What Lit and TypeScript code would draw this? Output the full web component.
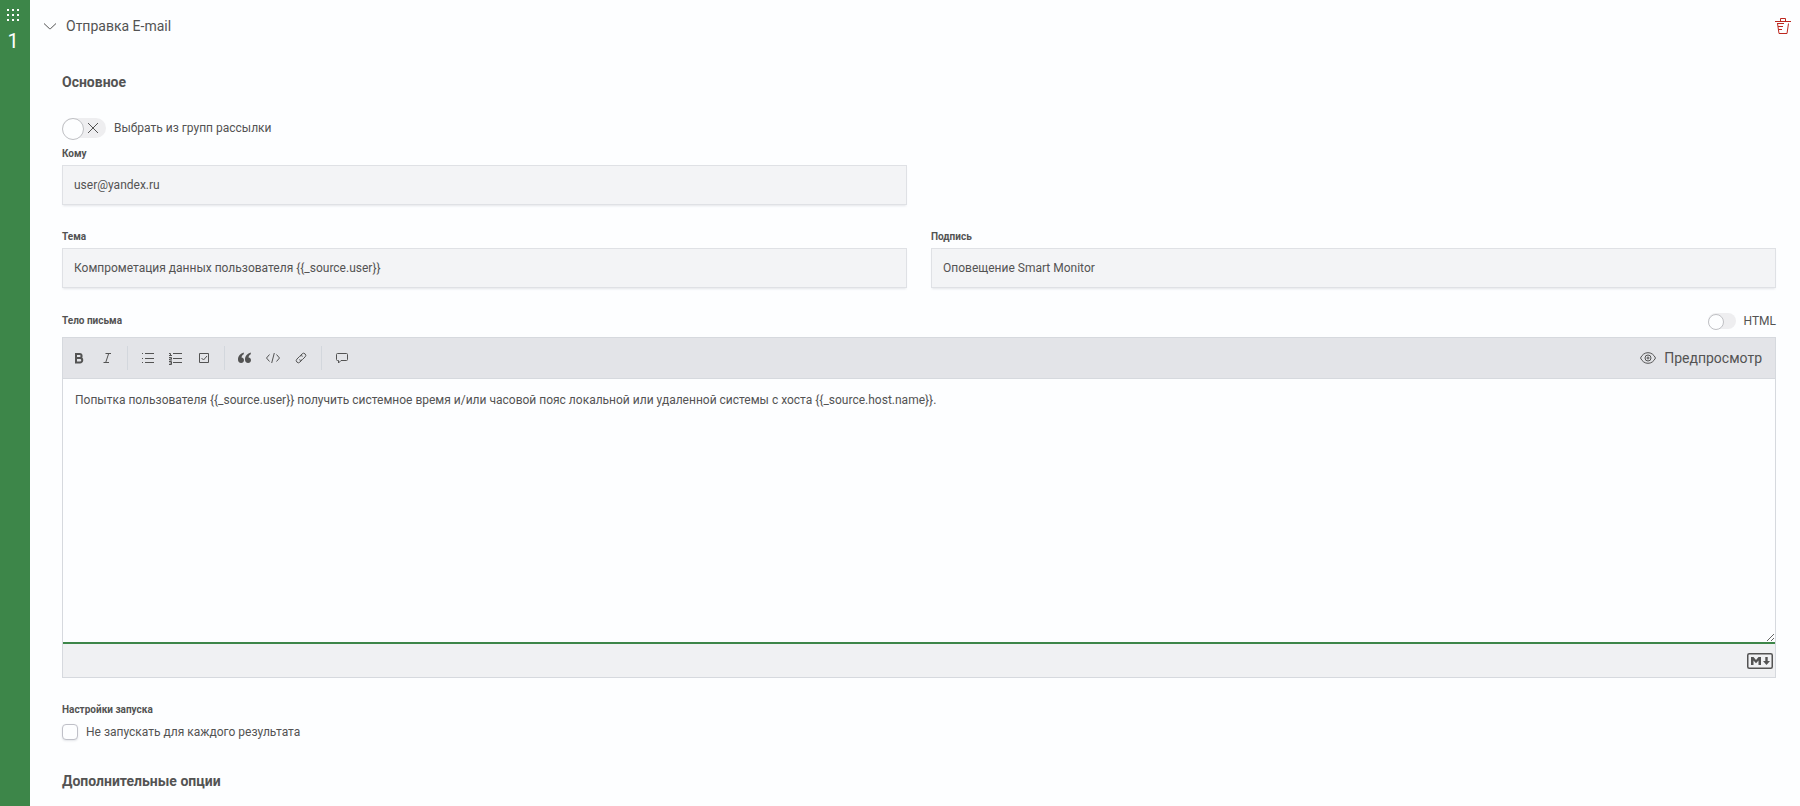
import { LitElement, html, svg, css, TemplateResult, SVGTemplateResult } from "lit";
import { customElement, state } from "lit/decorators.js";

interface Tool {
  label: string;
  icon: SVGTemplateResult;
}

const toolGroups: Tool[][] = [
  [
    {
      label: "Полужирный",
      icon: svg`<path fill="none" stroke="currentColor" stroke-width="2" d="M5 4h3.600a2 2 0 0 1 0 4H5m0 0h4a2.200 2.200 0 0 1 0 4.500H5M5 3v10.500"/>`,
    },
    {
      label: "Курсив",
      icon: svg`<path fill="none" stroke="currentColor" d="M6.500 3.500h5.500M4.500 12.500h5.500M9.700 3.500l-3 9"/>`,
    },
  ],
  [
    {
      label: "Маркированный список",
      icon: svg`<path fill="none" stroke="currentColor" d="M5 3.500h9M5 8.500h9M5 12.500h9M2 3.500h1M2 8.500h1M2 12.500h1"/>`,
    },
    {
      label: "Нумерованный список",
      icon: svg`<path fill="none" stroke="currentColor" d="M5 3.500h9M5 8.500h9M5 12.500h9M1 3.500h1.500v2.500M1 5.500h3M1 7.500h2.500v1.500h-2v1h2.500M1 11.500h2.500v3H1M1.500 13h2"/>`,
    },
    {
      label: "Список задач",
      icon: svg`<path fill="none" stroke="currentColor" d="M3.500 3.500h9v9h-9zM5.500 8l2 2 3.500-4"/>`,
    },
  ],
  [
    {
      label: "Цитата",
      icon: svg`<path fill="currentColor" d="M6.800 2.500C3.500 3.300 1 6 1 9.400c0 2 1.200 3.600 3.100 3.600 1.700 0 2.900-1.100 2.900-2.900 0-1.500-1-2.600-2.500-2.700.2-1.300 1-2.400 2.300-3.100zM13.800 2.500c-3.300.8-5.800 3.500-5.800 6.900 0 2 1.200 3.600 3.100 3.600 1.700 0 2.900-1.100 2.900-2.900 0-1.500-1-2.600-2.500-2.700.2-1.300 1-2.400 2.300-3.100z"/>`,
    },
    {
      label: "Код",
      icon: svg`<path fill="none" stroke="currentColor" d="M4.500 4.500L1.500 8l3 3.500M11.500 4.500l3 3.500-3 3.500M9.300 3l-2.600 10"/>`,
    },
    {
      label: "Ссылка",
      icon: svg`<path fill="none" stroke="currentColor" d="M7.200 5.800l1.900-1.900a2.100 2.100 0 0 1 3 3L9.300 9.700a2.100 2.100 0 0 1-3 0M8.800 10.200l-1.900 1.900a2.100 2.100 0 0 1-3-3l2.800-2.800a2.100 2.100 0 0 1 3 0"/>`,
    },
  ],
  [
    {
      label: "Комментарий",
      icon: svg`<path fill="none" stroke="currentColor" d="M3.500 3.500h9a1 1 0 0 1 1 1v5a1 1 0 0 1-1 1H7l-2.500 2.500v-2.500h-1a1 1 0 0 1-1-1v-5a1 1 0 0 1 1-1z"/>`,
    },
  ],
];

@customElement("app-root")
export class AppRoot extends LitElement {
  static styles = css`
    :host {
      display: flex;
      min-height: 100vh;
      background: #fdfeff;
      color: #535353;
      font-family: Roboto, "Noto Sans", sans-serif;
      font-size: 12px;
      line-height: 20px;
    }
    * {
      box-sizing: border-box;
    }
    svg {
      display: block;
      flex: none;
    }
    button {
      display: inline-flex;
      align-items: center;
      justify-content: center;
      padding: 0;
      border: 0;
      background: none;
      color: inherit;
      font: inherit;
      cursor: pointer;
    }
    .rail {
      display: flex;
      flex: none;
      flex-direction: column;
      gap: 6px;
      width: 30px;
      padding: 7px 5px;
      background: #3d8649;
      color: #fff;
    }
    .step {
      width: 16px;
      font-size: 20px;
      line-height: 24px;
      text-align: center;
    }
    .content {
      flex: 1;
      min-width: 0;
    }
    .head {
      display: flex;
      align-items: center;
      justify-content: space-between;
      height: 52px;
      padding: 0 9px 0 12px;
    }
    .toggle {
      gap: 8px;
      font-size: 14px;
    }
    .remove {
      color: #bd271e;
    }
    .form {
      padding: 18px 24px 12px 32px;
    }
    .title {
      margin: 0;
      font-size: 14px;
      line-height: 24px;
      font-weight: 700;
    }
    .group {
      display: flex;
      align-items: center;
      gap: 8px;
      width: max-content;
      margin-top: 24px;
    }
    .switch {
      display: grid;
      align-items: center;
    }
    .switch > * {
      grid-area: 1 / 1;
    }
    .cross {
      justify-self: end;
      margin-right: 5px;
      pointer-events: none;
    }
    .track {
      display: flex;
      width: 44px;
      height: 20px;
      margin: 0;
      border-radius: 10px;
      background: #eeeef0;
      appearance: none;
      cursor: pointer;
    }
    .track::before {
      content: "";
      width: 20px;
      height: 20px;
      border: 1px solid #bfc0c4;
      border-radius: 50%;
      background: #fdfeff;
    }
    .track:checked {
      justify-content: flex-end;
      background: #3d8649;
    }
    .track.small {
      width: 28px;
      height: 16px;
    }
    .track.small::before {
      width: 14px;
      height: 14px;
      margin: 1px 0;
    }
    .row {
      display: grid;
      grid-template-columns: 1fr 1fr;
      gap: 24px;
    }
    .row + .row {
      margin-top: 24px;
    }
    .group + .row {
      margin-top: 8px;
    }
    .field {
      display: flex;
      flex-direction: column;
      gap: 3px;
    }
    .label {
      font-size: 10px;
      line-height: 16px;
      font-weight: 700;
    }
    .input {
      width: 100%;
      height: 40px;
      padding: 0 11px;
      border: 1px solid #dfe1e5;
      border-radius: 0;
      outline: 0;
      background: #f3f4f6;
      box-shadow: 0 2px 2px -1px rgba(80, 90, 110, 0.15);
      color: inherit;
      font: inherit;
    }
    .bodyhead {
      display: flex;
      align-items: center;
      justify-content: space-between;
      margin: 23px 0 6px;
    }
    .html {
      display: flex;
      align-items: center;
      gap: 8px;
    }
    .editor {
      border: 1px solid #d6d9de;
    }
    .bar {
      display: flex;
      align-items: center;
      justify-content: space-between;
      height: 41px;
      padding: 0 13px 0 4px;
      border-bottom: 1px solid #d6d9de;
      background: #e3e4e8;
    }
    .tools,
    .set {
      display: flex;
      align-items: center;
    }
    .set {
      gap: 4px;
    }
    .set + .set {
      margin-left: 8px;
      padding-left: 8px;
      border-left: 1px solid #d3d7dd;
    }
    .tool {
      width: 24px;
      height: 24px;
    }
    .preview {
      gap: 8px;
      font-size: 14px;
    }
    .text {
      display: block;
      width: 100%;
      height: 265px;
      padding: 11px 12px;
      border: 0;
      border-bottom: 2px solid #3d8649;
      outline: 0;
      background: #fdfeff;
      color: inherit;
      font: inherit;
      resize: vertical;
    }
    .foot {
      display: flex;
      align-items: center;
      justify-content: flex-end;
      height: 33px;
      padding: 0 2px;
      background: #f0f1f3;
    }
    .launch {
      margin: 24px 0 0;
      padding: 0;
      border: 0;
    }
    .legend {
      padding: 0;
    }
    .check {
      display: flex;
      align-items: center;
      gap: 8px;
      width: max-content;
      padding-top: 4px;
    }
    .box {
      width: 16px;
      height: 16px;
      margin: 0;
      border: 1px solid #bfc0c8;
      border-radius: 4px;
      background: #fdfeff;
      box-shadow: 0 1px 2px rgba(80, 90, 110, 0.15);
      appearance: none;
    }
    .box:checked {
      background: #3d8649;
    }
    .launch + .title {
      margin-top: 27px;
    }
  `;

  @state() private open = true;

  private icon(content: SVGTemplateResult): TemplateResult {
    return html`<svg width="16" height="16" viewBox="0 0 16 16" aria-hidden="true">${content}</svg>`;
  }

  private field(id: string, label: string, value: string): TemplateResult {
    return html`<div class="field">
      <label class="label" for=${id}>${label}</label>
      <input class="input" id=${id} type="text" .value=${value} />
    </div>`;
  }

  private form(): TemplateResult {
    return html`<div class="form">
      <h2 class="title">Основное</h2>
      <label class="group">
        <span class="switch">
          <input class="track" type="checkbox" role="switch" />
          <svg class="cross" width="16" height="16" viewBox="0 0 16 16" aria-hidden="true">
            <path fill="none" stroke="currentColor" d="M3 3l10 10M13 3L3 13" />
          </svg>
        </span>
        Выбрать из групп рассылки
      </label>
      <div class="row">${this.field("to", "Кому", "user@yandex.ru")}</div>
      <div class="row">
        ${this.field("subject", "Тема", "Компрометация данных пользователя {{_source.user}}")}
        ${this.field("signature", "Подпись", "Оповещение Smart Monitor")}
      </div>
      <div class="bodyhead">
        <label class="label" for="body">Тело письма</label>
        <label class="html"><input class="track small" type="checkbox" role="switch" />HTML</label>
      </div>
      <div class="editor">
        <div class="bar">
          <div class="tools">
            ${toolGroups.map(
              (group) => html`<div class="set">
                ${group.map(
                  (tool) => html`<button class="tool" type="button" aria-label=${tool.label}>
                    ${this.icon(tool.icon)}
                  </button>`
                )}
              </div>`
            )}
          </div>
          <button class="preview" type="button">
            ${this.icon(svg`<g fill="none" stroke="currentColor"><path d="M.5 8C2.200 4.500 4.800 2.700 8 2.700S13.800 4.500 15.500 8C13.800 11.500 11.200 13.300 8 13.300S2.200 11.500.5 8z"/><circle cx="8" cy="8" r="3"/><circle cx="8" cy="8" r="1"/></g>`)}
            Предпросмотр
          </button>
        </div>
        <textarea
          class="text"
          id="body"
          .value=${"Попытка пользователя {{_source.user}} получить системное время и/или часовой пояс локальной или удаленной системы с хоста {{_source.host.name}}."}
        ></textarea>
        <div class="foot">
          <button type="button" aria-label="Справка по Markdown">
            <svg width="26" height="16" viewBox="0 0 26 16" aria-hidden="true">
              <rect x=".75" y=".75" width="24.500" height="14.500" rx="1.500" fill="none" stroke="currentColor" stroke-width="1.500" />
              <path fill="currentColor" d="M4 12V4h2.500L9 7l2.500-3H14v8h-2.500V7.500L9 10.200 6.500 7.500V12zM18.300 4h2.400v4H23l-3.500 4L16 8h2.300z" />
            </svg>
          </button>
        </div>
      </div>
      <fieldset class="launch">
        <legend class="label legend">Настройки запуска</legend>
        <label class="check"><input class="box" type="checkbox" />Не запускать для каждого результата</label>
      </fieldset>
      <h2 class="title">Дополнительные опции</h2>
    </div>`;
  }

  render() {
    return html`
      <aside class="rail">
        ${this.icon(svg`<path fill="currentColor" d="M2 2h2v2H2zM7 2h2v2H7zM12 2h2v2h-2zM2 7h2v2H2zM7 7h2v2H7zM12 7h2v2h-2zM2 12h2v2H2zM7 12h2v2H7zM12 12h2v2h-2z"/>`)}
        <span class="step">1</span>
      </aside>
      <main class="content">
        <header class="head">
          <button
            class="toggle"
            type="button"
            aria-expanded=${this.open ? "true" : "false"}
            @click=${() => (this.open = !this.open)}
          >
            ${this.icon(svg`<path fill="none" stroke="currentColor" d="M2 5.500l5.300 5a1 1 0 0 0 1.400 0L14 5.500"/>`)}
            Отправка E-mail
          </button>
          <button class="remove" type="button" aria-label="Удалить">
            ${this.icon(svg`<path fill="none" stroke="currentColor" d="M0 3.500h16M5.500 3.500v-3h5v3M2.500 5.500l1.500 10h8l1.500-10M2 5.500h7M3 8.500h5M3.500 11.500h3.500"/>`)}
          </button>
        </header>
        ${this.open ? this.form() : ""}
      </main>
    `;
  }
}
